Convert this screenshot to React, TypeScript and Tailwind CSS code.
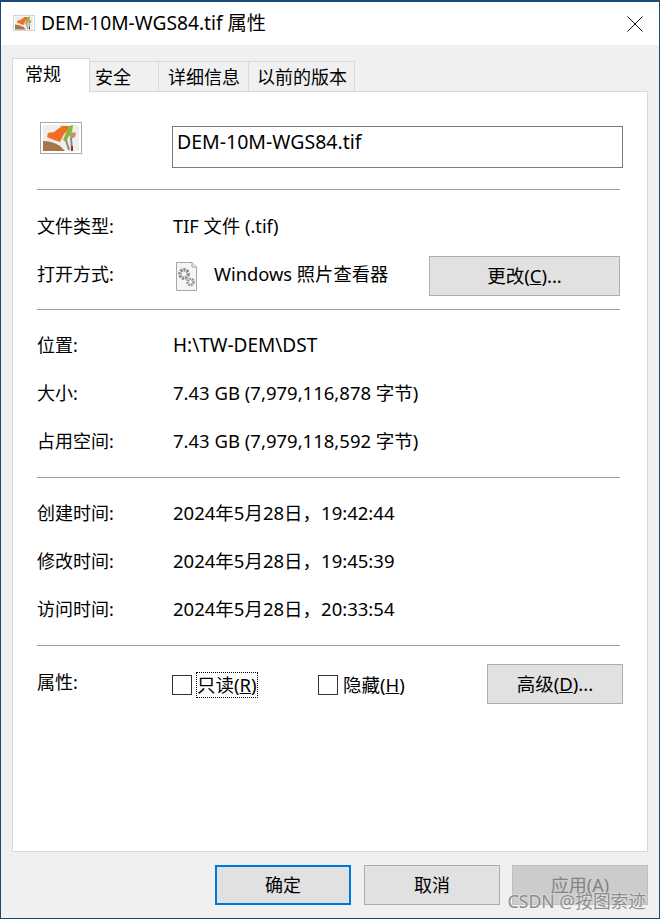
import React from "react";

const font = "[font-family:'Noto_Sans','Noto_Sans_CJK_SC',sans-serif]";

const TifIcon = ({ className }: { className: string }) => (
    <svg className={className} viewBox="0 0 42 32">
        <rect x="0.5" y="0.5" width="41" height="31" fill="#fff" stroke="#a8a8a8" />
        <rect x="3" y="3" width="36" height="26" fill="#eeeeea" />
        <path d="M3 29 L3 19 Q12 19 20 24 L25 29 Z" fill="#a5764a" />
        <path d="M8 11 L14 10 L22 4 L29 4 L28 8 L24 12 L20 20 L14 18 L7 15 Z" fill="#f26f21" />
        <path d="M23 18 L27 8 L29 4 L33 3 L32 10 L29 14 L26 20 Z" fill="#8fb63c" />
        <path d="M29 13 Q32 9 36 11 L35 15 L31 17 Z" fill="#b99a78" />
        <path d="M26 18 L29 28 M31 16 L32 28" stroke="#8a8a8a" strokeWidth="2" />
        <path d="M32 24 L32 29" stroke="#b3202a" strokeWidth="2" />
    </svg>
);

const Divider = () => <div className="h-px bg-[#a0a0a0]" />;

const Row = ({ label, value, valueClass }: { label: string; value: string; valueClass?: string }) => (
    <div className="flex h-12 items-center">
        <div className="w-[136px] text-[18px]">{label}</div>
        <div className={valueClass}>{value}</div>
    </div>
);

const Tab = ({ label, width, pad }: { label: string; width: string; pad: string }) => (
    <div className={`${width} ${pad} -ml-px flex h-[30px] items-center border border-b-0 border-[#d9d9d9] bg-[#f0f0f0] pt-0.5`}>
        {label}
    </div>
);

const Check = ({ children, focus }: { children: React.ReactNode; focus?: boolean }) => (
    <div className="-ml-px flex items-center gap-1">
        <div className="h-5 w-5 shrink-0 border border-[#333] bg-white" />
        <div className={focus ? "h-[26px] w-[62px] whitespace-nowrap border border-dotted border-black leading-[24px]" : "h-[26px] whitespace-nowrap border border-transparent leading-[24px]"}>{children}</div>
    </div>
);

const Btn = ({ children, className }: { children: React.ReactNode; className: string }) => (
    <div className={`flex h-10 shrink-0 items-center justify-center ${className}`}>{children}</div>
);

export default function App() {
    return (
        <div className={`${font} relative flex h-[919px] w-[660px] flex-col border-x border-b border-t-2 border-x-[#174a75] border-b-[#174a75] border-t-[#174a75] bg-[#f0f0f0] text-[18.5px] text-black`}>
            <div className="flex h-[43px] items-center justify-between bg-white pl-3 pr-4">
                <div className="flex items-center gap-1.5">
                    <TifIcon className="h-4 w-[22px]" />
                    <span className="text-[19.2px]">DEM-10M-WGS84.tif 属性</span>
                </div>
                <svg className="h-4 w-4" viewBox="0 0 16 16" fill="none" stroke="#111" strokeWidth="1">
                    <path d="M0.5 0.5 L15.5 15.5 M15.5 0.5 L0.5 15.5" />
                </svg>
            </div>

            <div className="flex flex-1 flex-col px-[11px] pb-[11px] pt-[12px]">
                <div className="z-10 flex h-[34px] items-end text-[18px]">
                    <div className="z-10 -mb-px flex h-[34px] w-[78px] items-center border border-b-0 border-[#d9d9d9] bg-white pb-[3px] pl-3">常规</div>
                    <Tab label="安全" width="w-[70px]" pad="pl-[5px]" />
                    <Tab label="详细信息" width="w-[91px]" pad="pl-[9px]" />
                    <Tab label="以前的版本" width="w-[107px]" pad="pl-[8px]" />
                </div>

                <div className="h-[761px] border border-[#d9d9d9] bg-white pl-6 pr-[27px]">
                    <div className="flex h-[97px] items-start pt-[30px]">
                        <div className="ml-[3px] w-[132px] shrink-0"><TifIcon className="h-8 w-[42px]" /></div>
                        <div className="mt-[4px] h-[42px] w-[451px] shrink-0 border border-[#7a7a7a] px-[4px] text-[19.5px] leading-[30px]">DEM-10M-WGS84.tif</div>
                    </div>
                    <Divider />

                    <div className="flex h-12 items-start pt-[23px]">
                        <div className="w-[136px] text-[18px] leading-[26px]">文件类型:</div>
                        <div className="text-[18.3px] leading-[26px]">TIF 文件 (.tif)</div>
                    </div>
                    <div className="flex h-[71px] items-start pt-[18px]">
                        <div className="w-[136px] pt-[5px] text-[18px] leading-[26px]">打开方式:</div>
                        <svg className="mt-[4px] h-[32px] w-[24px]" viewBox="0 0 24 32">
                            <path d="M3.5 2.5 H19 L23.5 7 V30.5 H3.5 Z" fill="#f4f5f7" stroke="#a6a6a6" />
                            <path d="M19 2.5 V7 H23.5" fill="#e4e4e4" stroke="#a6a6a6" />
                            <circle cx="11" cy="14" r="4.2" fill="none" stroke="#8d8d8d" strokeWidth="3.4" strokeDasharray="2.2 0.9" />
                            <circle cx="17.5" cy="22" r="3" fill="none" stroke="#979797" strokeWidth="2.6" strokeDasharray="1.8 0.7" />
                        </svg>
                        <div className="ml-[17px] w-[215px] pt-[5px] text-[18.3px] leading-[26px]">Windows 照片查看器</div>
                        <Btn className="w-[191px] border border-[#adadad] bg-[#e1e1e1]">
                            <span>更改(<span className="underline">C</span>)...</span>
                        </Btn>
                    </div>
                    <Divider />

                    <div className="pt-[11px]">
                        <Row label="位置:" value="H:\TW-DEM\DST" valueClass="text-[19px]" />
                        <Row label="大小:" value="7.43 GB (7,979,116,878 字节)" />
                        <Row label="占用空间:" value="7.43 GB (7,979,118,592 字节)" />
                    </div>
                    <div className="h-3" />
                    <Divider />

                    <div className="pt-[11px]">
                        <Row label="创建时间:" value={"2024年5月28日\uFF0C19:42:44"} />
                        <Row label="修改时间:" value={"2024年5月28日\uFF0C19:45:39"} />
                        <Row label="访问时间:" value={"2024年5月28日\uFF0C20:33:54"} />
                    </div>
                    <div className="h-3" />
                    <Divider />

                    <div className="flex items-start pt-[18px]">
                        <div className="w-[136px] shrink-0 pt-[6px] text-[18px] leading-6">属性:</div>
                        <div className="flex w-[314px] shrink-0 pt-[8px]">
                            <div className="w-[146px]"><Check focus>只读(<span className="underline">R</span>)</Check></div>
                            <Check>隐藏(<span className="underline">H</span>)</Check>
                        </div>
                        <Btn className="w-[136px] border border-[#adadad] bg-[#e1e1e1]">
                            <span>高级(<span className="underline">D</span>)...</span>
                        </Btn>
                    </div>
                </div>

                <div className="flex flex-1 items-start justify-end gap-3 pt-[13px] text-[18px]">
                    <Btn className="w-[136px] border-2 border-[#0078d7] bg-[#e1e1e1]">确定</Btn>
                    <Btn className="ml-px w-[136px] border border-[#adadad] bg-[#e1e1e1]">取消</Btn>
                    <Btn className="w-[136px] border border-[#bfbfbf] bg-[#cccccc] text-[#838383]">应用(A)</Btn>
                </div>
            </div>

            <div className="absolute right-[13px] top-[886px] text-[17.7px] text-[#8c8c8c] [text-shadow:0_0_2px_#fff]">CSDN @按图索迹</div>
        </div>
    );
}
